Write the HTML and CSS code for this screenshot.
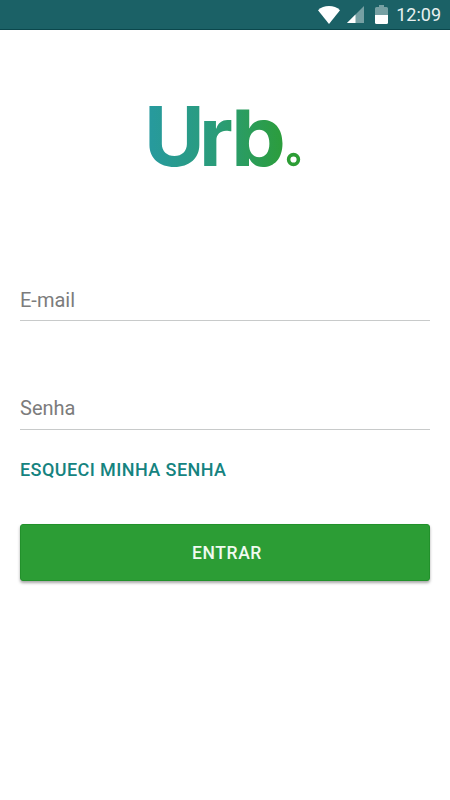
FILE: index.html
```html
<!DOCTYPE html>
<html lang="pt-BR">
<head>
  <meta charset="UTF-8">
  <meta name="viewport" content="width=device-width, initial-scale=1.0">
  <title>Urb</title>
  <link rel="stylesheet" href="styles.css">
</head>
<body>
  <header class="status-bar">
    <svg class="wifi" width="22" height="18" viewBox="0 0 22 18">
      <path d="M0 4.200C3 1.300 6.600 0 11 0s8 1.300 11 4.200L11 18z" fill="#fff"/>
    </svg>
    <svg class="signal" width="17" height="17" viewBox="0 0 17 17">
      <path d="M17 0v17H0z" fill="#fff" fill-opacity=".4"/>
      <path d="M8.500 8.500V17H0z" fill="#fff"/>
    </svg>
    <svg class="battery" width="13" height="19" viewBox="0 0 13 19">
      <path d="M4 0h5v2h2.500a1.500 1.500 0 0 1 1.500 1.500V10H0V3.500A1.500 1.500 0 0 1 1.500 2H4z" fill="#fff" fill-opacity=".4"/>
      <path d="M0 10h13v7.500a1.500 1.500 0 0 1-1.500 1.500h-10A1.500 1.500 0 0 1 0 17.500z" fill="#fff"/>
    </svg>
    <span class="clock">12:09</span>
  </header>

  <main class="login">
    <svg class="logo" width="172" height="104" viewBox="-10 -20 172 104">
      <defs>
        <linearGradient id="brand" gradientUnits="userSpaceOnUse" x1="0" y1="0" x2="136" y2="0">
          <stop offset="0" stop-color="#279a9e"/>
          <stop offset=".5" stop-color="#2a9c78"/>
          <stop offset="1" stop-color="#2c9d3a"/>
        </linearGradient>
        <!-- the stem of the b stops a little below the top of the U -->
        <clipPath id="stem">
          <path d="M80 4.500h76v76H80z"/>
        </clipPath>
      </defs>
      <g class="logo-text" fill="url(#brand)">
        <text x="-5 50" y="60.500">Ur</text>
        <text x="82" y="60.500" textLength="55" lengthAdjust="spacingAndGlyphs" clip-path="url(#stem)">b</text>
      </g>
      <circle cx="144.500" cy="54.500" r="4.900" fill="none" stroke="#2c9d35" stroke-width="3.600"/>
    </svg>

    <form class="form">
      <input class="field email" type="text" placeholder="E-mail">
      <input class="field" type="password" placeholder="Senha">
      <a class="forgot" href="#">ESQUECI MINHA SENHA</a>
      <button class="enter" type="button">ENTRAR</button>
    </form>
  </main>
</body>
</html>
```

FILE: styles.css
```css
* {
  box-sizing: border-box;
}

body {
  margin: 0;
  min-height: 100vh;
  font-family: Roboto, sans-serif;
  background: #fff;
}

.status-bar {
  display: flex;
  align-items: center;
  justify-content: flex-end;
  height: 30px;
  padding-right: 9px;
  background: #1b6166;
  border-bottom: 1px solid #0b474c;
}

.signal {
  margin-left: 7px;
}

.battery {
  margin-left: 11px;
}

.clock {
  margin-left: 8px;
  color: #e8f0f0;
  font-size: 18px;
  line-height: 29px;
}

.login {
  display: flex;
  flex-direction: column;
  padding: 55px 20px 0;
}

.logo {
  display: block;
  margin-left: 119px;
}

.logo-text {
  font-family: Inter, sans-serif;
  font-size: 83px;
  font-weight: 700;
}

.form {
  display: flex;
  flex-direction: column;
  margin-top: 89px;
}

.field {
  width: 100%;
  height: 43px;
  margin-bottom: 66px;
  padding: 0;
  border: none;
  border-bottom: 1px solid #c8caca;
  outline: none;
  background: none;
  font-family: inherit;
  font-size: 20px;
  color: #333;
}

.email {
  padding-top: 1px;
}

.field::placeholder {
  color: #7c7c7c;
}

.field + .forgot {
  margin-top: -38px;
}

.forgot {
  align-self: flex-start;
  color: #15837f;
  font-size: 18px;
  font-weight: 500;
  letter-spacing: 0.42px;
  line-height: 24px;
  text-decoration: none;
}

.enter {
  height: 57px;
  margin-top: 42px;
  padding: 0 0 0 4px;
  border: 1px solid #22912b;
  border-radius: 3px;
  background: #2c9d35;
  box-shadow: 0 2px 3px rgba(0, 0, 0, 0.35);
  color: #f0faf0;
  font-family: inherit;
  font-size: 17.5px;
  font-weight: 500;
  letter-spacing: 0.6px;
}
```
